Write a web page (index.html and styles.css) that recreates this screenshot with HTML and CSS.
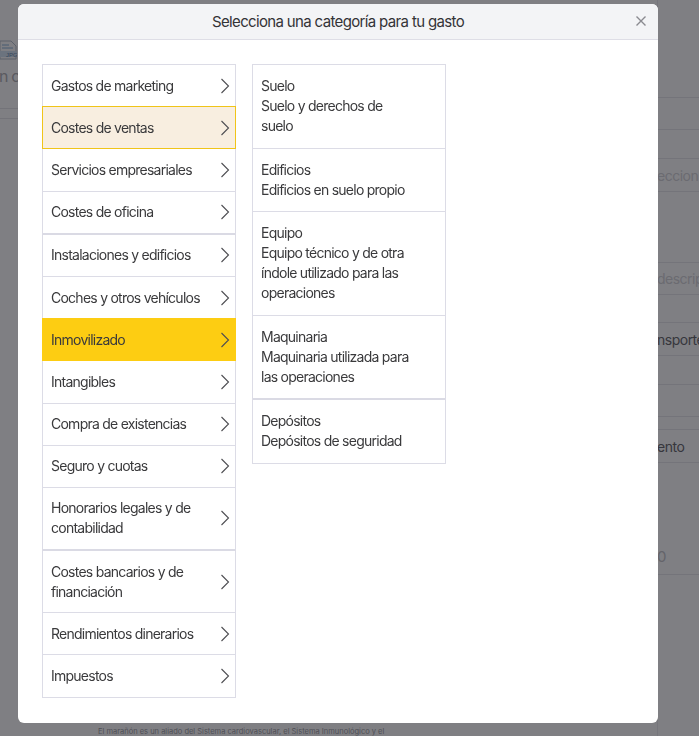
FILE: index.html
```html
<!DOCTYPE html>
<html lang="es">
<head>
<meta charset="utf-8">
<title>Selecciona una categoría</title>
<link rel="stylesheet" href="styles.css">
</head>
<body>
<div class="page">
  <aside class="side-left">
    <div class="file-icon">
      <svg width="18" height="20" viewBox="0 0 18 20">
        <path d="M1 1 H12 L17 6 V19 H1 Z" fill="none" stroke="#b9c2cc" stroke-width="1"/>
        <path d="M3 5 H10 M3 8 H14" stroke="#8fb4d8" stroke-width="1"/>
        <rect x="0" y="11" width="18" height="6" fill="#d7e6f4"/>
        <text x="7" y="16.5" font-size="6" fill="#6d8fb0" font-family="Liberation Sans, sans-serif">JPG</text>
      </svg>
    </div>
    <div class="side-text">n c</div>
    <div class="side-line"></div>
    <div class="side-line small"></div>
  </aside>
  <main class="page-main">
    <p class="footnote">El marañón es un aliado del Sistema cardiovascular, el Sistema Inmunológico y el</p>
  </main>
  <aside class="side-right">
    <div class="bg-row h98"></div>
    <div class="bg-row h32"></div>
    <div class="bg-row h29"></div>
    <div class="bg-row h33 placeholder">eccion</div>
    <div class="bg-row h71"></div>
    <div class="bg-row h32 placeholder">descrip</div>
    <div class="bg-row h28"></div>
    <div class="bg-row h33 value">nsporte</div>
    <div class="bg-row h29"></div>
    <div class="bg-row h32"></div>
    <div class="bg-row h13"></div>
    <div class="bg-row h33 value">ento</div>
    <div class="bg-row h112 amount">0</div>
  </aside>
</div>

<div class="overlay"></div>

<div class="modal" role="dialog" aria-label="Selecciona una categoría para tu gasto">
  <header class="modal-header">
    <h1 class="modal-title">Selecciona una categoría para tu gasto</h1>
    <button class="modal-close" aria-label="Cerrar">
      <svg width="12" height="12" viewBox="0 0 12 12"><path d="M1.5 1.5 L10.5 10.5 M10.5 1.5 L1.5 10.5" stroke="#8a8a90" stroke-width="1.4" fill="none"/></svg>
    </button>
  </header>
  <div class="modal-body">
    <ul class="cat-list">
      <li class="cat-item"><span>Gastos de marketing</span><svg class="chev" viewBox="0 0 10 16"><path d="M1.5 1 L8.5 8 L1.5 15"/></svg></li>
      <li class="cat-item is-hover"><span>Costes de ventas</span><svg class="chev" viewBox="0 0 10 16"><path d="M1.5 1 L8.5 8 L1.5 15"/></svg></li>
      <li class="cat-item"><span>Servicios empresariales</span><svg class="chev" viewBox="0 0 10 16"><path d="M1.5 1 L8.5 8 L1.5 15"/></svg></li>
      <li class="cat-item sep"><span>Costes de oficina</span><svg class="chev" viewBox="0 0 10 16"><path d="M1.5 1 L8.5 8 L1.5 15"/></svg></li>
      <li class="cat-item"><span>Instalaciones y edificios</span><svg class="chev" viewBox="0 0 10 16"><path d="M1.5 1 L8.5 8 L1.5 15"/></svg></li>
      <li class="cat-item"><span>Coches y otros vehículos</span><svg class="chev" viewBox="0 0 10 16"><path d="M1.5 1 L8.5 8 L1.5 15"/></svg></li>
      <li class="cat-item is-active"><span>Inmovilizado</span><svg class="chev" viewBox="0 0 10 16"><path d="M1.5 1 L8.5 8 L1.5 15"/></svg></li>
      <li class="cat-item"><span>Intangibles</span><svg class="chev" viewBox="0 0 10 16"><path d="M1.5 1 L8.5 8 L1.5 15"/></svg></li>
      <li class="cat-item"><span>Compra de existencias</span><svg class="chev" viewBox="0 0 10 16"><path d="M1.5 1 L8.5 8 L1.5 15"/></svg></li>
      <li class="cat-item"><span>Seguro y cuotas</span><svg class="chev" viewBox="0 0 10 16"><path d="M1.5 1 L8.5 8 L1.5 15"/></svg></li>
      <li class="cat-item sep"><span>Honorarios legales y de contabilidad</span><svg class="chev" viewBox="0 0 10 16"><path d="M1.5 1 L8.5 8 L1.5 15"/></svg></li>
      <li class="cat-item"><span>Costes bancarios y de financiación</span><svg class="chev" viewBox="0 0 10 16"><path d="M1.5 1 L8.5 8 L1.5 15"/></svg></li>
      <li class="cat-item"><span>Rendimientos dinerarios</span><svg class="chev" viewBox="0 0 10 16"><path d="M1.5 1 L8.5 8 L1.5 15"/></svg></li>
      <li class="cat-item last"><span>Impuestos</span><svg class="chev" viewBox="0 0 10 16"><path d="M1.5 1 L8.5 8 L1.5 15"/></svg></li>
    </ul>
    <ul class="sub-list">
      <li class="sub-item"><div>Suelo</div><div>Suelo y derechos de suelo</div></li>
      <li class="sub-item"><div>Edificios</div><div>Edificios en suelo propio</div></li>
      <li class="sub-item"><div>Equipo</div><div>Equipo técnico y de otra índole utilizado para las operaciones</div></li>
      <li class="sub-item sep"><div>Maquinaria</div><div>Maquinaria utilizada para las operaciones</div></li>
      <li class="sub-item last"><div>Depósitos</div><div>Depósitos de seguridad</div></li>
    </ul>
  </div>
</div>
</body>
</html>
```

FILE: styles.css
```css
* { box-sizing: border-box; }

html, body {
  margin: 0;
  padding: 0;
  height: 100%;
  overflow: hidden;
}

body {
  font-family: Inter, "Noto Sans", "Liberation Sans", sans-serif;
  background: #ffffff;
  color: #333;
}

/* ---------- background page ---------- */
.page {
  display: flex;
  height: 736px;
}

.side-left {
  width: 18px;
  flex: none;
  overflow: hidden;
  padding-top: 40px;
}

.file-icon {
  height: 22px;
  margin-left: -1px;
}

.side-text {
  margin-left: -1px;
  margin-top: 4px;
  font-size: 16px;
  line-height: 20px;
  letter-spacing: -0.8px;
  color: #b4b4b8;
  white-space: nowrap;
}

.side-line {
  margin-top: 22px;
  border-top: 1px solid #e6e6ea;
}

.side-line.small {
  margin-top: 9px;
}

.page-main {
  flex: 1;
  display: flex;
  align-items: flex-end;
  padding-left: 80px;
}

.footnote {
  margin: 0 0 -3px;
  font-size: 7.5px;
  line-height: 14px;
  color: #a0a0a6;
  white-space: nowrap;
}

.side-right {
  width: 42px;
  flex: none;
  overflow: hidden;
  border-left: 1px solid #ececf0;
}

.bg-row {
  border-bottom: 1px solid #e8e8ec;
  font-size: 14px;
  letter-spacing: -0.5px;
  white-space: nowrap;
  display: flex;
  align-items: center;
  margin-left: -1px;
}

.bg-row.placeholder { color: #d6d6da; }
.bg-row.value { color: #6e6e72; }
.bg-row.amount { color: #c8c8cc; align-items: flex-end; padding-bottom: 8px; font-size: 15px; }

.h13 { height: 13px; }
.h28 { height: 28px; }
.h29 { height: 29px; }
.h32 { height: 32px; }
.h33 { height: 33px; }
.h71 { height: 71px; }
.h98 { height: 98px; }
.h112 { height: 112px; }

/* ---------- overlay + modal ---------- */
.overlay {
  position: fixed;
  inset: 0;
  background: rgba(0, 0, 8, 0.5);
}

.modal {
  position: fixed;
  left: 18px;
  top: 4px;
  width: 640px;
  height: 719px;
  background: #ffffff;
  border-radius: 6px;
  overflow: hidden;
  display: flex;
  flex-direction: column;
}

.modal-header {
  height: 36px;
  flex: none;
  background: #f3f4f6;
  border-bottom: 1px solid #dedee6;
  display: flex;
  align-items: center;
  justify-content: center;
  position: relative;
}

.modal-title {
  margin: 0;
  font-size: 15px;
  font-weight: 400;
  color: #333336;
  letter-spacing: -0.65px;
}

.modal-close {
  position: absolute;
  right: 11px;
  top: 11px;
  width: 12px;
  height: 12px;
  padding: 0;
  border: 0;
  background: none;
  display: flex;
}

.modal-body {
  display: flex;
  align-items: flex-start;
  gap: 16px;
  padding: 24px 24px 0;
}

.cat-list,
.sub-list {
  list-style: none;
  margin: 0;
  padding: 0;
  width: 194px;
  border: 1px solid #dcdce6;
  border-bottom: 0;
}

.cat-item {
  display: flex;
  align-items: center;
  justify-content: space-between;
  padding: 10.6px 8px 10.6px 8px;
  min-height: 42.2px;
  border-bottom: 1px solid #dcdce6;
  font-size: 14px;
  line-height: 20px;
  letter-spacing: -0.75px;
  color: #3a3a3c;
  margin: 0 -1px;
  border-left: 1px solid transparent;
  border-right: 1px solid transparent;
}

.cat-item span {
  max-width: 150px;
}

.cat-item.sep { border-bottom: 2px solid #dadae4; }

.cat-item.is-hover {
  background: #f8eee0;
  border: 1px solid #f0c419;
  margin-top: -1px;
}

.cat-item.is-active {
  background: #fdcd12;
  border-color: #fdcd12;
  margin-top: -1px;
  border-top: 1px solid #fdcd12;
}

.chev {
  width: 10px;
  height: 16px;
  flex: none;
  fill: none;
  stroke: #4e4e52;
  stroke-width: 1.1;
  margin-right: -3px;
}

.sub-list {
  width: 194px;
}

.sub-item {
  padding: 11.25px 34px 11.25px 8px;
  border-bottom: 1px solid #dcdce6;
  font-size: 14px;
  line-height: 20px;
  letter-spacing: -0.75px;
  color: #3a3a3c;
}

.sub-item.sep { border-bottom: 2px solid #dadae4; }
```
